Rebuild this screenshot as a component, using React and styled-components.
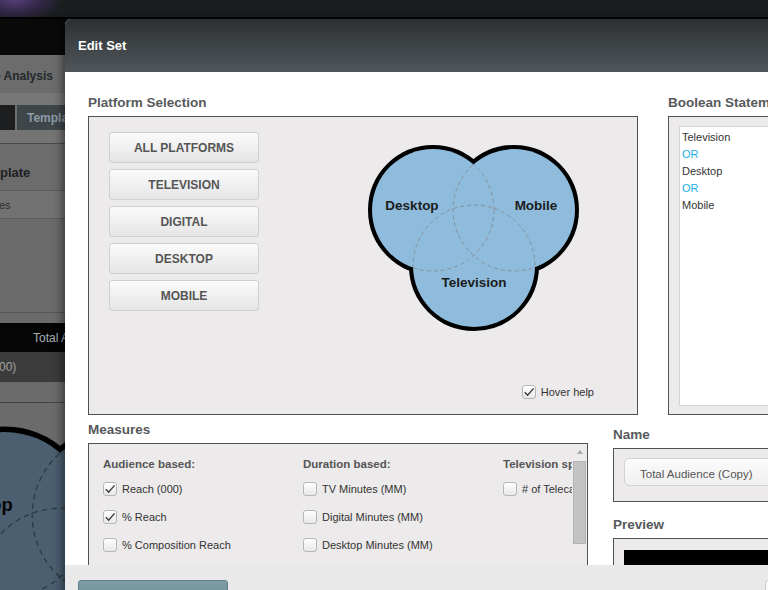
import React from "react";
import styled, { createGlobalStyle } from "styled-components";

const GlobalStyle = createGlobalStyle`
  html, body { margin: 0; padding: 0; overflow: hidden; width: 768px; height: 590px; }
  body { font-family: "Liberation Sans", Arial, sans-serif; background: #6b6b6b; }
  #root { width: 768px; height: 590px; overflow: hidden; }
`;

const Screen = styled.div`
  position: relative;
  width: 768px;
  height: 590px;
  overflow: hidden;
  background: #6b6b6b;
`;

/* ---------- dimmed background application ---------- */
const BgApp = styled.div`
  display: flex;
  flex-direction: column;
  width: 100%;
  height: 100%;
`;
const TopBar = styled.div`
  flex: none;
  height: 17px;
  border-bottom: 2px solid #000;
  background: radial-gradient(ellipse 50px 22px at 14px 0px, #55407a 0%, #34284a 50%, rgba(26, 29, 30, 0) 100%), #1a1d1e;
`;
const BgBand = styled.div`
  flex: none;
  height: ${(p) => p.$h}px;
  background: ${(p) => p.$bg};
  border-bottom: ${(p) => (p.$line ? `1px solid ${p.$line}` : "none")};
  display: flex;
  align-items: center;
  overflow: hidden;
  white-space: nowrap;
`;
const BgText = styled.span`
  font-size: ${(p) => p.$size || 12}px;
  font-weight: ${(p) => (p.$bold ? 700 : 400)};
  color: ${(p) => p.$color};
  margin-left: ${(p) => p.$x || 0}px;
  margin-top: ${(p) => p.$y || 0}px;
`;
const BgTabs = styled.div`
  flex: none;
  height: 25px;
  display: flex;
  gap: 2px;
  background: #6e6e6e;
`;
const BgTab = styled.div`
  width: ${(p) => p.$w}px;
  flex: ${(p) => (p.$grow ? 1 : "none")};
  background: ${(p) => p.$bg};
  display: flex;
  align-items: center;
  padding-left: ${(p) => p.$pad || 0}px;
  font-size: 12px;
  font-weight: 700;
  color: #8c9ba4;
`;
const BgCanvas = styled.div`
  flex: 1;
  overflow: hidden;
  background: #6b6b6b;
`;

/* ---------- modal ---------- */
const Modal = styled.div`
  position: absolute;
  top: 19px;
  left: 65px;
  width: 760px;
  display: flex;
  flex-direction: column;
  border-radius: 6px 6px 0 0;
  overflow: hidden;
  background: #fff;
  box-shadow: -3px 0 8px rgba(0, 0, 0, 0.45);
`;
const ModalHeader = styled.div`
  height: 53px;
  flex: none;
  display: flex;
  align-items: center;
  padding-left: 13px;
  background: linear-gradient(#2c3033, #50565a);
  color: #fff;
  font-size: 13px;
  font-weight: 700;
`;
const ModalBody = styled.div`
  height: 493px;
  flex: none;
  overflow: hidden;
  padding: 22px 0 0 23px;
  box-sizing: border-box;
  display: flex;
  flex-direction: column;
`;
const Row = styled.div`
  display: flex;
  gap: ${(p) => p.$gap}px;
  align-items: flex-start;
`;
const Section = styled.div`
  width: ${(p) => p.$w}px;
  flex: none;
  margin-top: ${(p) => p.$mt || 0}px;
  display: flex;
  flex-direction: column;
`;
const Title = styled.div`
  height: 18px;
  line-height: 18px;
  margin-top: ${(p) => p.$mt || 0}px;
  margin-bottom: 4px;
  font-size: 13.5px;
  font-weight: 700;
  color: #575a5c;
  white-space: nowrap;
`;
const Panel = styled.div`
  box-sizing: border-box;
  height: ${(p) => p.$h}px;
  border: 1px solid #4d5257;
  background: #eceaea;
  display: flex;
  flex-direction: ${(p) => p.$dir || "column"};
  padding: ${(p) => p.$pad || "0"};
  overflow: hidden;
`;
const PlatformTop = styled.div`
  display: flex;
  align-items: flex-start;
`;
const ButtonStack = styled.div`
  display: flex;
  flex-direction: column;
  gap: 6px;
  width: 150px;
  flex: none;
`;
const PlatformButton = styled.button`
  height: 31px;
  box-sizing: border-box;
  border: 1px solid #d0cfcf;
  border-radius: 3px;
  background: linear-gradient(#fbfbfb, #e5e5e5);
  font-family: "Liberation Sans", Arial, sans-serif;
  font-size: 12px;
  font-weight: 700;
  color: #555;
  padding: 1px 0 0;
  cursor: pointer;
`;
const VennWrap = styled.div`
  margin: 8px 0 0 101px;
`;
const HoverRow = styled.label`
  margin-top: auto;
  align-self: flex-end;
  margin-right: 23px;
  display: flex;
  align-items: center;
  gap: 5px;
  font-size: 11px;
  color: #333;
`;
const CheckBox = styled.span`
  width: 14px;
  height: 14px;
  box-sizing: border-box;
  border: 1px solid #b6b6b6;
  border-radius: 3px;
  background: linear-gradient(#fff, #e8e8e8);
  display: inline-flex;
  align-items: center;
  justify-content: center;
  flex: none;
`;
const BoolBox = styled.div`
  flex: 1;
  background: #fff;
  border: 1px solid #d4d4d4;
  padding: 2px 2px;
  font-size: 11px;
  line-height: 17px;
  color: #333;
`;
const BoolLine = styled.div`
  color: ${(p) => (p.$op ? "#1aaee6" : "#333")};
`;
const MeasureContent = styled.div`
  flex: 1;
  overflow: hidden;
  display: flex;
  padding: 13px 0 0 14px;
`;
const MeasureCol = styled.div`
  width: 200px;
  flex: none;
  display: flex;
  flex-direction: column;
  gap: 14px;
  white-space: nowrap;
`;
const ColHead = styled.div`
  height: 14px;
  line-height: 14px;
  font-size: 11.5px;
  font-weight: 700;
  color: #555;
  margin-bottom: -3px;
`;
const MeasureItem = styled.label`
  height: 14px;
  display: flex;
  align-items: center;
  gap: 5px;
  font-size: 11px;
  color: #333;
`;
const ScrollBar = styled.div`
  width: 15px;
  flex: none;
  display: flex;
  flex-direction: column;
  align-items: center;
`;
const ScrollArrow = styled.div`
  margin-top: 6px;
  width: 0;
  height: 0;
  border-left: 3.5px solid transparent;
  border-right: 3.5px solid transparent;
  border-bottom: 4px solid #a9a9a9;
`;
const ScrollThumb = styled.div`
  margin-top: 7px;
  width: 13px;
  height: 83px;
  box-sizing: border-box;
  background: #c3c3c3;
  border: 1px solid #b3b3b3;
`;
const NameInput = styled.div`
  height: 28px;
  box-sizing: border-box;
  border: 1px solid #d2d2d2;
  border-radius: 5px;
  background: linear-gradient(#fbfbfb, #f0f0f0);
  display: flex;
  align-items: center;
  padding: 3px 0 0 15px;
  font-size: 11.5px;
  color: #555;
  white-space: nowrap;
`;
const PreviewBar = styled.div`
  height: 30px;
  background: #000;
`;
const Footer = styled.div`
  height: 40px;
  flex: none;
  background: #e9e9e9;
  display: flex;
  align-items: flex-start;
  padding: 15px 0 0 13px;
  box-sizing: border-box;
  gap: 537px;
`;
const FooterButton = styled.div`
  width: ${(p) => p.$w}px;
  height: 30px;
  flex: none;
  box-sizing: border-box;
  border-radius: 3px;
  border: 1px solid ${(p) => (p.$primary ? "#5f7f88" : "#c8c8c8")};
  background: ${(p) => (p.$primary ? "linear-gradient(#7e9da6, #6a8a93)" : "linear-gradient(#fdfdfd, #efefef)")};
`;

function Check({ checked }) {
  return (
    <CheckBox>
      {checked && (
        <svg width="12" height="12" viewBox="0 0 12 12">
          <path d="M1.8 6.3 L4.6 9.2 L10.6 2.4" fill="none" stroke="#3b3b3b" strokeWidth="1.4" />
        </svg>
      )}
    </CheckBox>
  );
}

const C = { D: [73, 70], M: [154, 70], T: [114, 126] };
const R = 61;
const LABELS = [
  ["Desktop", 52, 70],
  ["Mobile", 176, 70],
  ["Television", 114, 147],
];

function VennShapes({ fill, dash, text, id, labels }) {
  const keys = ["D", "M", "T"];
  return (
    <>
      <defs>
        {keys.map((k) => (
          <clipPath id={`${id}-${k}`} key={k}>
            {keys
              .filter((o) => o !== k)
              .map((o) => (
                <circle key={o} cx={C[o][0]} cy={C[o][1]} r={R - 0.5} />
              ))}
          </clipPath>
        ))}
      </defs>
      {keys.map((k) => (
        <circle key={k} cx={C[k][0]} cy={C[k][1]} r={R} fill="#000" stroke="#000" strokeWidth="8" />
      ))}
      {keys.map((k) => (
        <circle key={k} cx={C[k][0]} cy={C[k][1]} r={R} fill={fill} />
      ))}
      {keys.map((k) => (
        <circle
          key={k}
          cx={C[k][0]}
          cy={C[k][1]}
          r={R}
          fill="none"
          stroke={dash}
          strokeWidth="1"
          strokeDasharray="4 3"
          clipPath={`url(#${id}-${k})`}
        />
      ))}
      <g fontFamily="'Liberation Sans', Arial, sans-serif" fontWeight="700" fontSize="13.5" fill={text} textAnchor="middle">
        {labels.map(([t, x, y]) => (
          <text key={t} x={x} y={y}>
            {t}
          </text>
        ))}
      </g>
    </>
  );
}

function Venn() {
  return (
    <svg width="230" height="200" viewBox="0 0 230 200">
      <VennShapes id="fg" fill="#8fbcdc" dash="#86909a" text="#1c1c1c" labels={LABELS} />
    </svg>
  );
}

function BgVenn() {
  return (
    <svg width="120" height="190" viewBox="0 0 120 190">
      <g transform="translate(-94.3 16.8) scale(1.36)">
        <VennShapes id="bg" fill="#4b5f70" dash="#2f3a44" text="#050505" labels={[["Desktop", 52, 67]]} />
      </g>
    </svg>
  );
}

const measures = [
  {
    head: "Audience based:",
    items: [
      ["Reach (000)", true],
      ["% Reach", true],
      ["% Composition Reach", false],
      ["Composition Index", false],
    ],
  },
  {
    head: "Duration based:",
    items: [
      ["TV Minutes (MM)", false],
      ["Digital Minutes (MM)", false],
      ["Desktop Minutes (MM)", false],
      ["Mobile Minutes (MM)", false],
    ],
  },
  {
    head: "Television specific:",
    items: [["# of Telecasts", false]],
  },
];

export default function App() {
  return (
    <Screen>
      <GlobalStyle />
      <BgApp>
        <TopBar />
        <BgBand $h={36} $bg="#090909" />
        <BgBand $h={38} $bg="#6c6c6c">
          <BgText $bold $color="#25292c" $x={-6} $y={4}>
            e Analysis
          </BgText>
        </BgBand>
        <BgBand $h={12} $bg="#777" />
        <BgTabs>
          <BgTab $w={15} $bg="#1d1e1f" />
          <BgTab $grow $pad={10} $bg="#3f4649">
            Templates
          </BgTab>
        </BgTabs>
        <BgBand $h={13} $bg="#747474" $line="#4a4a4a" />
        <BgBand $h={46} $bg="#6c6c6c" $line="#5a5a5a">
          <BgText $bold $size={13} $color="#1c2023" $x={0} $y={10}>
            plate
          </BgText>
        </BgBand>
        <BgBand $h={27} $bg="#727272" $line="#5c5c5c">
          <BgText $size={11} $color="#2e2e2e" $x={-1}>
            es
          </BgText>
        </BgBand>
        <BgBand $h={93} $bg="#6b6b6b" $line="#555" />
        <BgBand $h={10} $bg="#6b6b6b" />
        <BgBand $h={29} $bg="#050505">
          <BgText $color="#a7b1b6" $x={33}>
            Total Audience
          </BgText>
        </BgBand>
        <BgBand $h={30} $bg="#3b3b3b">
          <BgText $color="#a3a3a3" $x={-1}>
            00)
          </BgText>
        </BgBand>
        <BgBand $h={20} $bg="#6b6b6b" $line="#444" />
        <BgCanvas>
          <BgVenn />
        </BgCanvas>
      </BgApp>

      <Modal>
        <ModalHeader>Edit Set</ModalHeader>
        <ModalBody>
          <Row $gap={30}>
            <Section $w={550}>
              <Title>Platform Selection</Title>
              <Panel $h={299} $pad="15px 20px 15px 20px">
                <PlatformTop>
                  <ButtonStack>
                    {["ALL PLATFORMS", "TELEVISION", "DIGITAL", "DESKTOP", "MOBILE"].map((b) => (
                      <PlatformButton key={b}>{b}</PlatformButton>
                    ))}
                  </ButtonStack>
                  <VennWrap>
                    <Venn />
                  </VennWrap>
                </PlatformTop>
                <HoverRow>
                  <Check checked />
                  Hover help
                </HoverRow>
              </Panel>
            </Section>
            <Section $w={180}>
              <Title>Boolean Statement</Title>
              <Panel $h={299} $pad="9px 10px 8px 10px">
                <BoolBox>
                  <BoolLine>Television</BoolLine>
                  <BoolLine $op>OR</BoolLine>
                  <BoolLine>Desktop</BoolLine>
                  <BoolLine $op>OR</BoolLine>
                  <BoolLine>Mobile</BoolLine>
                </BoolBox>
              </Panel>
            </Section>
          </Row>
          <Row $gap={25}>
            <Section $w={500} $mt={6}>
              <Title>Measures</Title>
              <Panel $h={160} $dir="row">
                <MeasureContent>
                  {measures.map((col) => (
                    <MeasureCol key={col.head}>
                      <ColHead>{col.head}</ColHead>
                      {col.items.map(([label, on]) => (
                        <MeasureItem key={label}>
                          <Check checked={on} />
                          {label}
                        </MeasureItem>
                      ))}
                    </MeasureCol>
                  ))}
                </MeasureContent>
                <ScrollBar>
                  <ScrollArrow />
                  <ScrollThumb />
                </ScrollBar>
              </Panel>
            </Section>
            <Section $w={200} $mt={11}>
              <Title>Name</Title>
              <Panel $h={54} $pad="9px 10px">
                <NameInput>Total Audience (Copy)</NameInput>
              </Panel>
              <Title $mt={14}>Preview</Title>
              <Panel $h={60} $pad="11px 10px">
                <PreviewBar />
              </Panel>
            </Section>
          </Row>
        </ModalBody>
        <Footer>
          <FooterButton $primary $w={150} />
          <FooterButton $w={60} />
        </Footer>
      </Modal>
    </Screen>
  );
}
